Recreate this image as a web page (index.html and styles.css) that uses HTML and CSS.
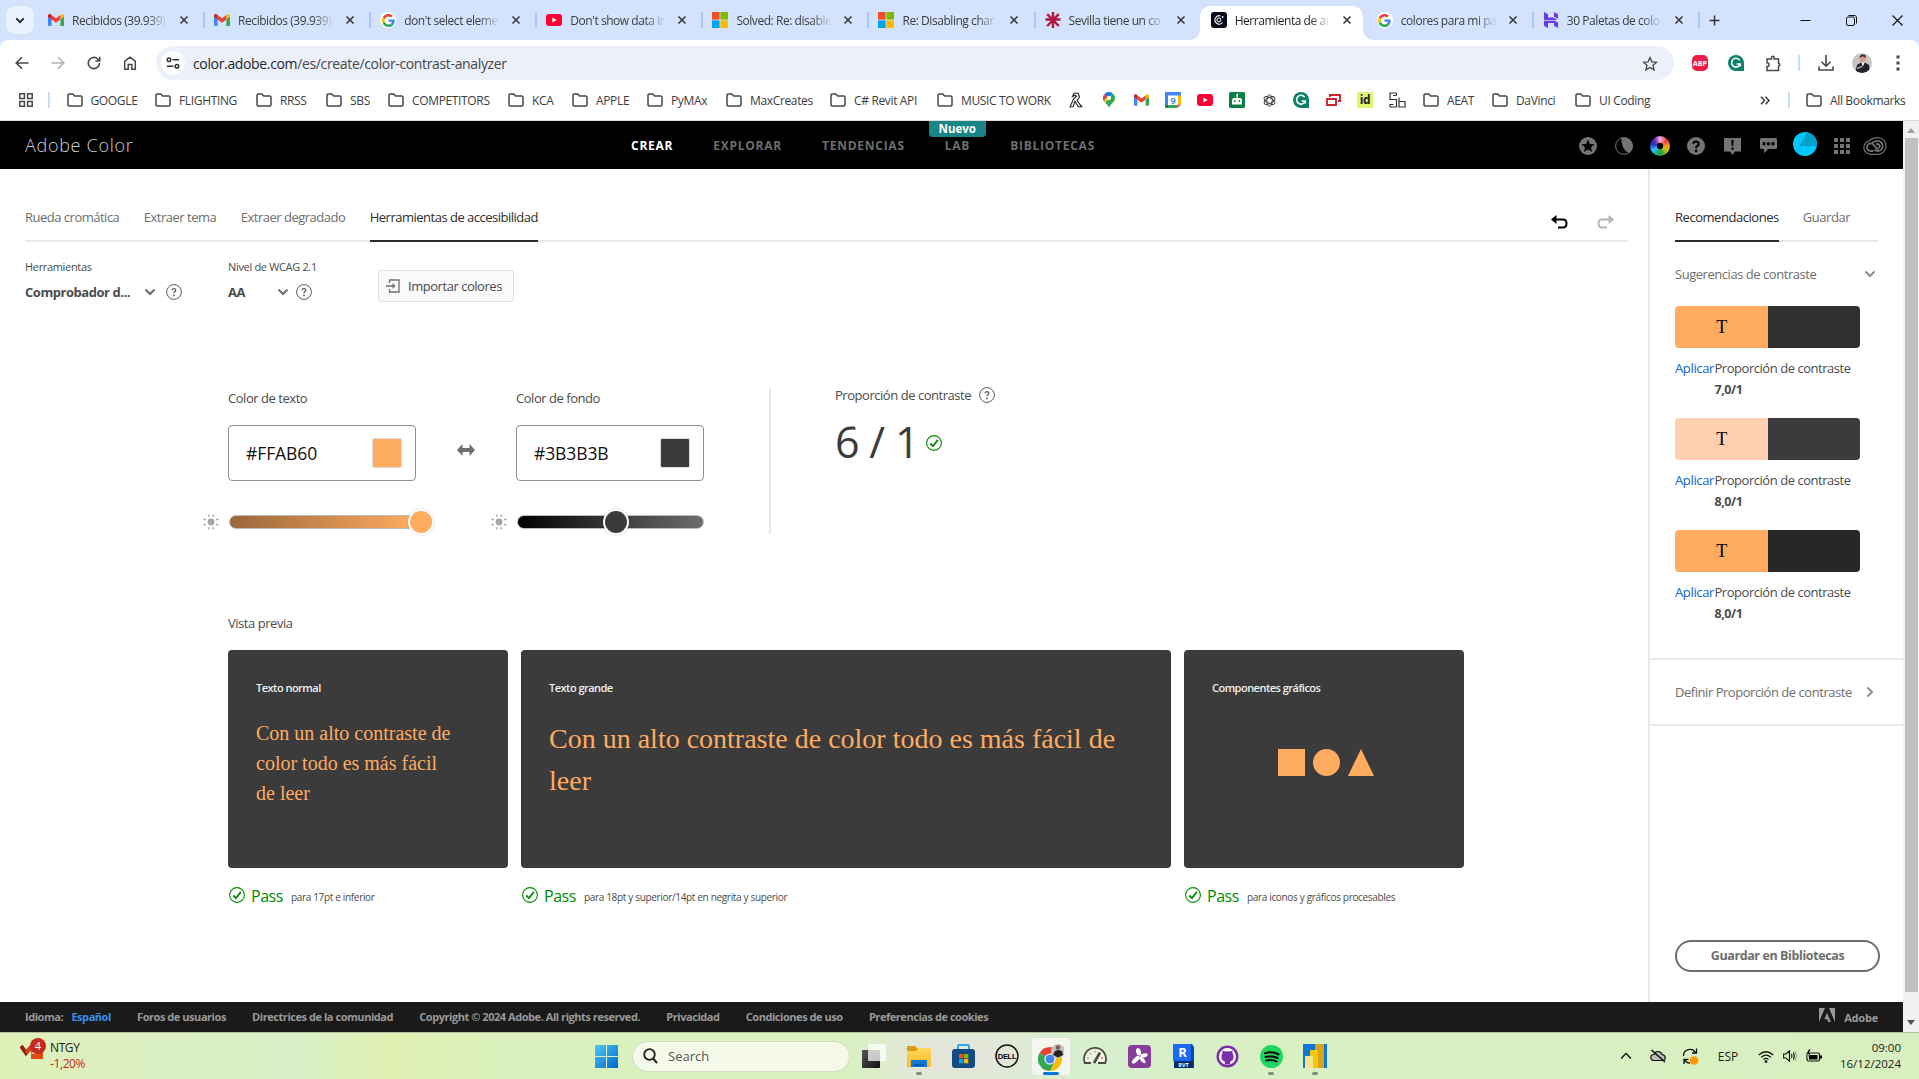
FILE: index.html
```html
<!DOCTYPE html>
<html lang="es">
<head>
<meta charset="utf-8">
<title>Herramienta de análisis de contraste | Adobe Color</title>
<link rel="stylesheet" href="styles.css">
</head>
<body>
<svg class="defs" aria-hidden="true">
  <linearGradient id="winBlue" x1="0" y1="0" x2="1" y2="1"><stop offset="0" stop-color="#4fc8fb"/><stop offset="1" stop-color="#0067c8"/></linearGradient>
  <linearGradient id="folderGold" x1="0" y1="0" x2="0" y2="1"><stop offset="0" stop-color="#ffd95e"/><stop offset="1" stop-color="#fbb829"/></linearGradient>
  <linearGradient id="darkTile" x1="0" y1="0" x2="1" y2="1"><stop offset="0" stop-color="#555"/><stop offset="1" stop-color="#111"/></linearGradient>
  <symbol id="folder" viewBox="0 0 16 14"><path d="M1 2.2Q1 1 2.2 1H5.8L7.6 3H13.8Q15 3 15 4.2V11.8Q15 13 13.8 13H2.2Q1 13 1 11.8Z" fill="none" stroke="#474747" stroke-width="1.5"/></symbol>
  <symbol id="x" viewBox="0 0 10 10"><path d="M1.5 1.5L8.5 8.5M8.5 1.5L1.5 8.5" stroke="#333" stroke-width="1.5"/></symbol>
  <symbol id="gmail" viewBox="0 0 16 12"><path d="M0 2V11a1 1 0 0 0 1 1H3.6V4.6Z" fill="#4285f4"/><path d="M16 2V11a1 1 0 0 1-1 1H12.4V4.6Z" fill="#34a853"/><path d="M12.4 1V5.5L16 2.8V1.6C16 .2 14.3-.5 13.2.4Z" fill="#fbbc04"/><path d="M3.6 5.5V1L8 4.3 12.4 1V5.5L8 8.8Z" fill="#ea4335"/><path d="M0 1.6V2.8L3.6 5.5V1L2.8.4C1.7-.5 0 .2 0 1.6Z" fill="#c5221f"/></symbol>
  <symbol id="google" viewBox="0 0 48 48"><path fill="#ea4335" d="M24 9.500c3.500 0 6.700 1.200 9.200 3.600l6.900-6.900C35.900 2.400 30.500 0 24 0 14.600 0 6.500 5.400 2.600 13.200l8 6.200C12.400 13.700 17.700 9.500 24 9.500z"/><path fill="#4285f4" d="M47 24.500c0-1.600-.2-3.100-.4-4.500H24v9h12.900c-.6 3-2.300 5.500-4.800 7.200l7.700 6C44.400 38 47 31.800 47 24.500z"/><path fill="#fbbc05" d="M10.500 28.600c-.5-1.500-.8-3-.8-4.600s.3-3.100.8-4.600l-8-6.200C.9 16.500 0 20.100 0 24s.9 7.500 2.600 10.800z"/><path fill="#34a853" d="M24 48c6.500 0 11.900-2.100 15.900-5.800l-7.700-6c-2.200 1.500-4.900 2.300-8.200 2.300-6.300 0-11.600-4.200-13.500-9.900l-8 6.200C6.500 42.600 14.600 48 24 48z"/></symbol>
  <symbol id="youtube" viewBox="0 0 16 14"><rect y="1" width="16" height="12" rx="3" fill="#ff0033"/><path d="M6.300 4.500L10.700 7 6.300 9.500Z" fill="#fff"/></symbol>
  <symbol id="microsoft" viewBox="0 0 16 16"><path fill="#f25022" d="M0 0h7.600v7.600H0z"/><path fill="#7fba00" d="M8.400 0H16v7.600H8.400z"/><path fill="#00a4ef" d="M0 8.400h7.600V16H0z"/><path fill="#ffb900" d="M8.400 8.400H16V16H8.400z"/></symbol>
  <symbol id="grammarly" viewBox="0 0 16 16"><path d="M8 0a8 8 0 0 1 8 8v8H8A8 8 0 0 1 8 0Z" fill="#0c8068"/><path d="M11.600 5.200A4.400 4.400 0 1 0 12.200 9H8.600M12.200 8.800V11.400" fill="none" stroke="#fff" stroke-width="1.600"/></symbol>
  <symbol id="help" viewBox="0 0 16 16"><circle cx="8" cy="8" r="7.400" fill="none" stroke="#5a5a5a"/><path d="M6.200 6.200C6.200 4.200 9.800 4.200 9.700 6.300 9.700 7.500 8 7.600 8 9.200" fill="none" stroke="#5a5a5a" stroke-width="1.300"/><circle cx="8" cy="11.400" r=".9" fill="#5a5a5a"/></symbol>
  <symbol id="pass" viewBox="0 0 16 16"><circle cx="8" cy="8" r="7.400" fill="none" stroke="#008a00" stroke-width="1.100"/><path d="M4.300 8.500L7 11.200 11.800 4.900" fill="none" stroke="#008a00" stroke-width="1.800"/></symbol>
  <symbol id="down" viewBox="0 0 12 8"><path d="M1.500 1.500L6 6 10.500 1.500" fill="none" stroke="currentColor" stroke-width="2"/></symbol>
  <symbol id="sun" viewBox="0 0 16 16"><circle cx="8" cy="8" r="3.400" fill="#a5a5a5"/><path d="M5.500.8L6.200 2.900M10.500.8L9.800 2.900M5.500 15.200L6.200 13.100M10.500 15.200L9.800 13.100M.6 5L2.800 5.900M15.400 5L13.200 5.900M.6 11L2.800 10.100M15.400 11L13.200 10.100" stroke="#a5a5a5" stroke-width="1.400"/></symbol>
</svg>

<header class="browser">
  <div class="tabstrip">
    <div class="tab-search"><svg width="10" height="7" viewBox="0 0 12 8"><path d="M1.500 1.500L6 6 10.500 1.500" fill="none" stroke="#1f1f1f" stroke-width="2.200"/></svg></div>
    <div class="tab"><svg class="fav" width="15" height="12"><use href="#gmail"/></svg><span class="tab-title">Recibidos (39.939)</span><svg class="close"><use href="#x"/></svg></div>
    <div class="tab"><svg class="fav" width="15" height="12"><use href="#gmail"/></svg><span class="tab-title">Recibidos (39.939)</span><svg class="close"><use href="#x"/></svg></div>
    <div class="tab"><span class="fav disc"><svg width="13" height="13"><use href="#google"/></svg></span><span class="tab-title">don't select eleme</span><svg class="close"><use href="#x"/></svg></div>
    <div class="tab"><svg class="fav" width="16" height="14"><use href="#youtube"/></svg><span class="tab-title">Don't show data in</span><svg class="close"><use href="#x"/></svg></div>
    <div class="tab"><svg class="fav" width="16" height="16"><use href="#microsoft"/></svg><span class="tab-title">Solved: Re: disable</span><svg class="close"><use href="#x"/></svg></div>
    <div class="tab"><svg class="fav" width="16" height="16"><use href="#microsoft"/></svg><span class="tab-title">Re: Disabling char</span><svg class="close"><use href="#x"/></svg></div>
    <div class="tab no-rule"><svg class="fav" width="16" height="16" viewBox="0 0 16 16"><path d="M8 0V16M.5 7.500H15.500M2.200 2.200L13.800 14M13.800 2.200L2.200 14" stroke="#b0163f" stroke-width="2.400"/></svg><span class="tab-title">Sevilla tiene un co</span><svg class="close"><use href="#x"/></svg></div>
    <div class="tab active"><svg class="fav" width="16" height="16" viewBox="0 0 16 16"><rect width="16" height="16" rx="3" fill="#070b1c"/><path d="M11.500 10.500A4.200 4.200 0 1 1 9.500 3.900" fill="none" stroke="#fff" stroke-width="1.100"/><circle cx="7.900" cy="7.900" r="2" fill="none" stroke="#fff"/><circle cx="11.600" cy="5" r=".9" fill="#fff"/></svg><span class="tab-title">Herramienta de ar</span><svg class="close"><use href="#x"/></svg></div>
    <div class="tab"><span class="fav disc"><svg width="13" height="13"><use href="#google"/></svg></span><span class="tab-title">colores para mi pa</span><svg class="close"><use href="#x"/></svg></div>
    <div class="tab"><svg class="fav" width="16" height="16" viewBox="0 0 16 16"><path d="M1 0L5 2.200V5.500H10.500L14.500 8H1ZM11 0L15 2.200V6.800L11 4.700ZM1 8.800H11.500L15 10.600V16L11 13.800V11H5V16L1 13.800Z" fill="#673de6"/></svg><span class="tab-title">30 Paletas de colo</span><svg class="close"><use href="#x"/></svg></div>
    <svg class="new-tab" width="11" height="11" viewBox="0 0 11 11"><path d="M5.500 .5V10.500M.5 5.500H10.500" stroke="#333" stroke-width="1.500"/></svg>
    <div class="window-controls">
      <svg width="11" height="11" viewBox="0 0 11 11"><path d="M.5 5.500H10.500" stroke="#111"/></svg>
      <svg width="11" height="11" viewBox="0 0 11 11"><rect x=".5" y="2" width="8" height="8.500" rx="1.500" fill="none" stroke="#111"/><path d="M2.500 .5H8.500Q10.500 .5 10.500 2.500V8.500" fill="none" stroke="#111"/></svg>
      <svg width="11" height="11" viewBox="0 0 11 11"><path d="M.5 .5L10.500 10.500M10.500 .5L.5 10.500" stroke="#111" stroke-width="1.100"/></svg>
    </div>
  </div>

  <div class="toolbar">
    <div class="nav-buttons">
      <svg width="14" height="14" viewBox="0 0 14 14"><path d="M13.500 7H1.500M7 1.200L1.200 7 7 12.800" fill="none" stroke="#474747" stroke-width="1.600"/></svg>
      <svg width="14" height="14" viewBox="0 0 14 14"><path d="M.5 7H12.500M7 1.200L12.800 7 7 12.800" fill="none" stroke="#b2b2b2" stroke-width="1.600"/></svg>
      <svg width="14" height="14" viewBox="0 0 14 14"><path d="M12.500 7A5.600 5.600 0 1 1 10.800 3L12.300 4.600M12.700 .8V5H8.400" fill="none" stroke="#474747" stroke-width="1.600"/></svg>
      <svg width="14" height="14" viewBox="0 0 14 14"><path d="M1.700 13.200V5.200L7 1.100 12.300 5.200V13.200H8.800V8.500H5.200V13.200Z" fill="none" stroke="#474747" stroke-width="1.500"/></svg>
    </div>
    <div class="omnibox">
      <span class="site-info"><svg width="14" height="12" viewBox="0 0 14 12"><circle cx="3" cy="2.700" r="1.800" fill="none" stroke="#333" stroke-width="1.500"/><circle cx="11" cy="9.300" r="1.800" fill="none" stroke="#333" stroke-width="1.500"/><path d="M6.500 2.700H13M1 9.300H7.500" stroke="#333" stroke-width="1.500"/></svg></span>
      <span class="url">color.adobe.com<span class="path">/es/create/color-contrast-analyzer</span></span>
      <svg class="star" width="16" height="15" viewBox="0 0 16 15"><path d="M8 1.500L9.900 5.800 14.600 6.200 11 9.300 12.100 13.900 8 11.400 3.900 13.900 5 9.300 1.400 6.200 6.100 5.800Z" fill="none" stroke="#474747" stroke-width="1.300"/></svg>
    </div>
    <div class="extensions">
      <span class="abp">ABP</span>
      <svg width="16" height="16"><use href="#grammarly"/></svg>
      <svg width="17" height="17" viewBox="0 0 17 17"><path d="M2 4H6.500V2.500a1.300 1.300 0 0 1 2.600 0V4H13.500V8.500a1.300 1.300 0 0 1 0 2.600V15.500H2V11.600C4.800 11.600 4.800 7.800 2 7.800Z" fill="none" stroke="#474747" stroke-width="1.500"/></svg>
      <i class="rule"></i>
      <svg width="16" height="16" viewBox="0 0 16 16"><path d="M8 0V11M3.500 6.800L8 11.200 12.500 6.800M1 11.500V15H15V11.500" fill="none" stroke="#474747" stroke-width="1.600"/></svg>
      <svg width="20" height="20" viewBox="0 0 20 20"><clipPath id="face"><circle cx="10" cy="10" r="10"/></clipPath><g clip-path="url(#face)"><path fill="#c8c6c4" d="M0 0h20v20H0z"/><ellipse cx="10.500" cy="6" rx="2.800" ry="3.600" fill="#cf9f87"/><path d="M7.500 5Q7.500 1.500 11 1.500T13.800 5L12 3.500H9.500Z" fill="#332520"/><path d="M3 20L5 12 9 9.500 11 12 13 9.500 17 12 18 20Z" fill="#23232b"/><path d="M9.600 9.500L10.800 14 12.400 9.500Z" fill="#fff"/><path d="M5 15.500L10 13.500" stroke="#c99a84" stroke-width="1.500"/></g></svg>
      <svg width="4" height="16" viewBox="0 0 4 16"><path d="M.5 .5h3v3h-3zM.5 6.500h3v3h-3zM.5 12.500h3v3h-3z" fill="#474747"/></svg>
    </div>
  </div>

  <nav class="bookmarks">
    <svg width="14" height="14" viewBox="0 0 14 14"><path d="M.8 .8h4.600v4.600H.8zM8.600 .8h4.600v4.600H8.600zM.8 8.600h4.600v4.600H.8zM8.600 8.600h4.600v4.600H8.600z" fill="none" stroke="#474747" stroke-width="1.500"/></svg>
    <i class="rule"></i>
    <a><svg class="folder"><use href="#folder"/></svg><span>GOOGLE</span></a>
    <a><svg class="folder"><use href="#folder"/></svg><span>FLIGHTING</span></a>
    <a><svg class="folder"><use href="#folder"/></svg><span>RRSS</span></a>
    <a><svg class="folder"><use href="#folder"/></svg><span>SBS</span></a>
    <a><svg class="folder"><use href="#folder"/></svg><span>COMPETITORS</span></a>
    <a><svg class="folder"><use href="#folder"/></svg><span>KCA</span></a>
    <a><svg class="folder"><use href="#folder"/></svg><span>APPLE</span></a>
    <a><svg class="folder"><use href="#folder"/></svg><span>PyMAx</span></a>
    <a><svg class="folder"><use href="#folder"/></svg><span>MaxCreates</span></a>
    <a><svg class="folder"><use href="#folder"/></svg><span>C# Revit API</span></a>
    <a><svg class="folder"><use href="#folder"/></svg><span>MUSIC TO WORK</span></a>
    <a class="mark"><svg width="14" height="16" viewBox="0 0 14 16"><path d="M3.500 4.500L5 1.200H9.200L10.500 5 8 8.500 12.800 14.800H9.500L5.800 9.500 4.200 14.800 1 15 4.500 7 7.500 4.200 6 3.200Z" fill="none" stroke="#222" stroke-width="1.100"/></svg></a>
    <a class="mark"><svg width="12" height="16" viewBox="0 0 12 16"><path d="M6 0A6 6 0 0 0 1.300 2.300L6 6.200 9.500 1.200A6 6 0 0 0 6 0Z" fill="#1a73e8"/><path d="M1.300 2.300A6 6 0 0 0 .8 9L5 4.900Z" fill="#ea4335"/><path d="M9.500 1.200L2 10.500Q.5 9 .3 7L7 4Z" fill="#4285f4"/><path d="M.8 8.500L4.500 4.500 7.800 7.200 2.800 11.600Z" fill="#fbbc04"/><path d="M9.500 1.200A6 6 0 0 1 11.400 8.500C10 11.200 7 12.500 6 16 5.300 13.500 4 12.600 2.600 11.200Z" fill="#34a853"/><circle cx="6" cy="5.900" r="2.100" fill="#fff"/></svg></a>
    <a class="mark"><svg width="15" height="12"><use href="#gmail"/></svg></a>
    <a class="mark"><svg width="16" height="16" viewBox="0 0 16 16"><path fill="#4285f4" d="M0 0H16V4H0z"/><path fill="#4285f4" d="M0 0H3V13H0z"/><path fill="#fbbc04" d="M13 3.500H16V12.500H13z"/><path fill="#34a853" d="M3 13H12.500V16H3z"/><path fill="#188038" d="M0 13H3V16H1.500Q0 16 0 14.500z"/><path fill="#ea4335" d="M12.500 12.500H16L12.500 16z"/><path fill="#fff" d="M3 3.500H13V13H3z"/><text x="8" y="11.500" class="cal">9</text></svg></a>
    <a class="mark"><svg width="16" height="14"><use href="#youtube"/></svg></a>
    <a class="mark"><svg width="16" height="16" viewBox="0 0 16 16"><rect width="16" height="16" rx="1.500" fill="#0b8043"/><path d="M3 8Q3 6 5 6H11Q13 6 13 8V12.500H3ZM7.300 2.500L9.500 1 8.500 6H7.500Z" fill="#fff"/><circle cx="5.700" cy="9" r=".9" fill="#0b8043"/><circle cx="10.300" cy="9" r=".9" fill="#0b8043"/></svg></a>
    <a class="mark"><svg width="13" height="13" viewBox="0 0 14 14"><g fill="none" stroke="#333" stroke-width="1"><ellipse cx="7" cy="7" rx="3" ry="6.300"/><ellipse cx="7" cy="7" rx="3" ry="6.300" transform="rotate(60 7 7)"/><ellipse cx="7" cy="7" rx="3" ry="6.300" transform="rotate(120 7 7)"/></g></svg></a>
    <a class="mark"><svg width="16" height="16"><use href="#grammarly"/></svg></a>
    <a class="mark"><svg width="15" height="12" viewBox="0 0 15 12"><path d="M1 5H10V11H1ZM4 3V1H14V7H12" fill="none" stroke="#c9252d" stroke-width="1.900"/></svg></a>
    <a class="mark"><span class="idealista">id</span></a>
    <a class="mark"><svg width="17" height="16" viewBox="0 0 17 16"><path d="M7.500 1H1V7.500H7.500V15H1M7.500 3.500H4M7.500 1V3.500M10 5.500V15H16V9.500H10M1 15V12.500H4.500" fill="none" stroke="#333" stroke-width="1.200"/></svg></a>
    <a><svg class="folder"><use href="#folder"/></svg><span>AEAT</span></a>
    <a><svg class="folder"><use href="#folder"/></svg><span>DaVinci</span></a>
    <a><svg class="folder"><use href="#folder"/></svg><span>UI Coding</span></a>
    <svg width="10" height="9" viewBox="0 0 10 9"><path d="M1 .8L4.500 4.500 1 8.200M5.500 .8L9 4.500 5.500 8.200" fill="none" stroke="#333" stroke-width="1.400"/></svg>
    <i class="rule"></i>
    <a><svg class="folder"><use href="#folder"/></svg><span>All Bookmarks</span></a>
  </nav>
</header>

<div class="viewport">
  <div class="page">
    <header class="app-bar">
      <div class="brand">Adobe Color</div>
      <nav class="app-nav"><a class="on">CREAR</a><a>EXPLORAR</a><a>TENDENCIAS</a><a class="lab">LAB<span class="new">Nuevo</span></a><a>BIBLIOTECAS</a></nav>
      <div class="app-icons">
        <svg width="18" height="18" viewBox="0 0 18 18"><circle cx="9" cy="9" r="9" fill="#747474"/><path d="M9 2.600L10.900 6.900 15.500 7.300 12 10.400 13.100 15 9 12.500 4.900 15 6 10.400 2.500 7.300 7.100 6.900Z" fill="#000"/></svg>
        <svg width="18" height="18" viewBox="0 0 18 18"><circle cx="9" cy="9" r="8.400" fill="none" stroke="#747474"/><path d="M6.200 1A8.500 8.500 0 0 1 13.800 16.100Q6.500 12.500 6.200 1Z" fill="#747474"/></svg>
        <i class="wheel"></i>
        <svg width="18" height="18" viewBox="0 0 18 18"><circle cx="9" cy="9" r="9" fill="#747474"/><path d="M6.300 6.800C6.300 3.800 11.800 3.700 11.800 6.800 11.800 8.700 9.100 8.700 9.100 11.200" fill="none" stroke="#000" stroke-width="2.200"/><circle cx="9.100" cy="13.900" r="1.400"/></svg>
        <svg width="17" height="18" viewBox="0 0 17 18"><path d="M0 1H17V14.500H11L8.500 18 6 14.500H0Z" fill="#747474"/><path d="M7.300 3H9.700L9.300 9H7.700ZM7.400 10.500H9.600V12.700H7.400Z"/></svg>
        <svg width="17" height="17" viewBox="0 0 17 17"><path d="M1.500 1H15.500Q17 1 17 2.500V10.500Q17 12 15.500 12H8L4 16.500V12H1.500Q0 12 0 10.500V2.500Q0 1 1.500 1Z" fill="#747474"/><path d="M2.500 5.200h3v3h-3zM7 5.200h3v3H7zM11.500 5.200h3v3h-3z"/></svg>
        <svg class="avatar" width="24" height="24" viewBox="0 0 24 24"><circle cx="12" cy="12" r="12" fill="#00c8ff"/><path d="M7 14L14 .2A12 12 0 0 1 23.800 14Z" fill="#009fcc"/></svg>
        <svg width="16" height="16" viewBox="0 0 16 16"><path d="M0 0h4v4H0zM6 0h4v4H6zM12 0h4v4h-4zM0 6h4v4H0zM6 6h4v4H6zM12 6h4v4h-4zM0 12h4v4H0zM6 12h4v4H6zM12 12h4v4h-4z" fill="#747474"/></svg>
        <svg width="24" height="18" viewBox="0 0 24 18"><path d="M7.500 17.300A6.800 6.800 0 0 1 6.500 3.800Q9.500 .7 14.700 .7A8.300 8.300 0 0 1 14.700 17.300Z" fill="none" stroke="#747474" stroke-width="1.200"/><path d="M10.500 14H7.700A3.800 3.800 0 0 1 7.700 6.400Q9.500 6.400 10.700 7.800L15 13M9.200 6.200Q11 3.800 14.500 3.800A5.200 5.200 0 0 1 14.500 14.200Q12.800 14.200 11.500 12.500M13 7.500Q14 6.800 15.200 7A2.300 2.300 0 0 1 15.500 11.200" fill="none" stroke="#747474" stroke-width="1.800"/></svg>
      </div>
    </header>

    <div class="columns">
      <main class="work">
        <nav class="sections">
          <a>Rueda cromática</a><a>Extraer tema</a><a>Extraer degradado</a><a class="on">Herramientas de accesibilidad</a>
          <span class="history">
            <svg width="17" height="14" viewBox="0 0 17 14"><path d="M1 4.500H12Q15.500 4.500 15.500 8.500T12 12.500H7" fill="none" stroke="#000" stroke-width="2"/><path d="M5.500 0V9L0 4.500Z"/></svg>
            <svg width="17" height="14" viewBox="0 0 17 14"><path d="M16 4.500H5Q1.500 4.500 1.500 8.500T5 12.500H10" fill="none" stroke="#b5b5b5" stroke-width="2"/><path d="M11.500 0V9L17 4.500Z" fill="#b5b5b5"/></svg>
          </span>
        </nav>
        <div class="options">
          <div class="option"><label>Herramientas</label><div class="pick"><b class="tool-name">Comprobador d...</b><svg class="chev"><use href="#down"/></svg><svg class="q"><use href="#help"/></svg></div></div>
          <div class="option wcag"><label>Nivel de WCAG 2.1</label><div class="pick"><b class="level">AA</b><svg class="chev"><use href="#down"/></svg><svg class="q"><use href="#help"/></svg></div></div>
          <button class="import"><svg width="14" height="14" viewBox="0 0 14 14"><path d="M3.500 4V1H13V13H3.500V10M0 7H8" fill="none" stroke="#707070" stroke-width="1.300"/><path d="M6.500 4L9.500 7 6.500 10Z" fill="#707070"/></svg><span>Importar colores</span></button>
        </div>

        <div class="analyzer">
          <section class="color">
            <h3>Color de texto</h3>
            <div class="field"><span>#FFAB60</span><i class="chip orange"></i></div>
            <div class="slider"><svg class="sun"><use href="#sun"/></svg><div class="track warm"></div><i class="thumb warm-thumb"></i></div>
          </section>
          <svg class="swap" width="18" height="12" viewBox="0 0 18 12"><path d="M0 6L5.500 0V4H12.500V0L18 6 12.500 12V8H5.500V12Z" fill="#6e6e6e"/></svg>
          <section class="color">
            <h3>Color de fondo</h3>
            <div class="field"><span>#3B3B3B</span><i class="chip dark"></i></div>
            <div class="slider"><svg class="sun"><use href="#sun"/></svg><div class="track cool"></div><i class="thumb cool-thumb"></i></div>
          </section>
          <section class="ratio">
            <h3>Proporción de contraste<svg class="q"><use href="#help"/></svg></h3>
            <div class="score"><span>6 / 1</span><svg class="tick"><use href="#pass"/></svg></div>
          </section>
        </div>

        <h3 class="preview-title">Vista previa</h3>
        <div class="previews">
          <section><div class="card"><h4>Texto normal</h4><p class="normal">Con un alto contraste de color todo es más fácil de leer</p></div>
            <div class="result"><svg class="tick"><use href="#pass"/></svg><b>Pass</b><span>para 17pt e inferior</span></div></section>
          <section><div class="card"><h4>Texto grande</h4><p class="large">Con un alto contraste de color todo es más fácil de leer</p></div>
            <div class="result"><svg class="tick"><use href="#pass"/></svg><b>Pass</b><span>para 18pt y superior/14pt en negrita y superior</span></div></section>
          <section><div class="card"><h4>Componentes gráficos</h4><svg class="shapes" width="96" height="27" viewBox="0 0 96 27"><path d="M0 0H27V27H0zM83 0L96 27H70z"/><circle cx="48.500" cy="13.500" r="13.500"/></svg></div>
            <div class="result"><svg class="tick"><use href="#pass"/></svg><b>Pass</b><span>para iconos y gráficos procesables</span></div></section>
        </div>
      </main>

      <aside class="panel">
        <nav class="panel-tabs"><a class="on">Recomendaciones</a><a>Guardar</a></nav>
        <div class="panel-head"><span>Sugerencias de contraste</span><svg class="chev"><use href="#down"/></svg></div>
        <div class="tips">
          <div class="tip"><div class="pair"><b class="orange">T</b><i class="tone-a"></i></div><div class="tip-text"><a>Aplicar</a><div><span>Proporción de contraste</span><strong>7,0/1</strong></div></div></div>
          <div class="tip"><div class="pair"><b class="peach">T</b><i class="dark"></i></div><div class="tip-text"><a>Aplicar</a><div><span>Proporción de contraste</span><strong>8,0/1</strong></div></div></div>
          <div class="tip"><div class="pair"><b class="orange">T</b><i class="tone-b"></i></div><div class="tip-text"><a>Aplicar</a><div><span>Proporción de contraste</span><strong>8,0/1</strong></div></div></div>
        </div>
        <div class="define"><span>Definir Proporción de contraste</span><svg class="chev side"><use href="#down"/></svg></div>
        <button class="save">Guardar en Bibliotecas</button>
      </aside>
    </div>

    <footer class="site-footer">
      <span>Idioma:</span><a class="lang">Español</a><a>Foros de usuarios</a><a>Directrices de la comunidad</a><a>Copyright © 2024 Adobe. All rights reserved.</a><a>Privacidad</a><a>Condiciones de uso</a><a>Preferencias de cookies</a>
      <span class="adobe"><svg width="16" height="14" viewBox="0 0 16 14"><path d="M0 0H6L0 14ZM10 0H16V14ZM8 5L12 14H9.300L8.200 11.200H5.300Z" fill="#999"/></svg><em>Adobe</em></span>
    </footer>
  </div>
  <div class="scrollbar"><svg width="8" height="5" viewBox="0 0 8 5"><path d="M4 0L8 5H0Z" fill="#9f9f9f"/></svg><i></i><svg width="8" height="5" viewBox="0 0 8 5"><path d="M0 0H8L4 5Z" fill="#505050"/></svg></div>
</div>

<footer class="taskbar">
  <div class="widget">
    <svg width="28" height="30" viewBox="0 0 28 30"><path d="M11 14H23V26H11Z" fill="#e04a10"/><path d="M1 13L6 20 11 14" fill="none" stroke="#8e1f12" stroke-width="4"/><path d="M6 20L14 12 17 17" fill="none" stroke="#d8430f" stroke-width="4"/><path d="M11 21H17L14 17Z" fill="#f3c3a5"/></svg>
    <span class="badge">4</span>
    <div class="quote"><span>NTGY</span><span class="loss">-1,20%</span></div>
  </div>
  <svg class="start" width="23" height="23" viewBox="0 0 23 23"><path d="M0 0H11V11H0zM12 0H23V11H12zM0 12H11V23H0zM12 12H23V23H12z" fill="url(#winBlue)"/></svg>
  <div class="search"><svg width="15" height="16" viewBox="0 0 15 16"><circle cx="6.500" cy="6.500" r="5.300" fill="none" stroke="#222" stroke-width="1.800"/><path d="M10.200 10.500L14 15" stroke="#222" stroke-width="2"/></svg><span>Search</span></div>
  <div class="apps">
    <div class="app"><svg width="24" height="24" viewBox="0 0 24 24"><rect x="0" y="6" width="18" height="18" rx="1" fill="url(#darkTile)"/><rect x="6" y="0" width="18" height="17" rx="1" fill="#fff" opacity=".75"/></svg></div>
    <div class="app open"><svg width="24" height="24" viewBox="0 0 24 24"><path d="M0 3Q0 2 1 2H8L11 5V10H0Z" fill="#dc9a06"/><path d="M0 7H9L12 4H23Q24 4 24 5V22Q24 23 23 23H1Q0 23 0 22Z" fill="url(#folderGold)"/><path d="M4 17Q4 16 5 16H19Q20 16 20 17V23H4Z" fill="#0f7ad4"/><path d="M7 20h10v2H7z" fill="#075aa8"/></svg></div>
    <div class="app"><svg width="23" height="24" viewBox="0 0 23 24"><path d="M6 6V2Q6 1 7 1H16Q17 1 17 2V6" fill="none" stroke="#29a9ea" stroke-width="2"/><rect y="5" width="23" height="19" rx="3" fill="#154b84"/><path fill="#f25022" d="M7 10h4.300v4.300H7z"/><path fill="#7fba00" d="M12 10h4.300v4.300H12z"/><path fill="#00a4ef" d="M7 15h4.300v4.300H7z"/><path fill="#ffb900" d="M12 15h4.300v4.300H12z"/></svg></div>
    <div class="app"><svg width="24" height="24" viewBox="0 0 24 24"><circle cx="12" cy="12" r="11" fill="none" stroke="#111" stroke-width="1.500"/><text x="12" y="14.800" class="dell">DELL</text></svg></div>
    <div class="app focus"><svg width="26" height="28" viewBox="0 0 26 28"><g transform="translate(12 16)"><path d="M0 0L-10.400-6A12 12 0 0 1 10.400-6Z" fill="#ea4335"/><path d="M0 0L-10.400-6A12 12 0 0 0 0 12L5 3Z" fill="#34a853"/><path d="M0 0L5 3 0 12A12 12 0 0 0 10.400-6H0Z" fill="#fbbc04"/><circle r="5.600" fill="#fff"/><circle r="4.500" fill="#4285f4"/></g><circle cx="20" cy="8" r="7" fill="#c4c0bd"/><circle cx="20" cy="4.500" r="2.200" fill="#7b5a4c"/><path d="M15 12L17 8 20 7 24 8 25 12 20 14.500Z" fill="#222"/></svg></div>
    <div class="app"><svg width="24" height="18" viewBox="0 0 24 18"><path d="M8 16H1.800A11 11 0 1 1 22.200 16H15" fill="#eef3dc" stroke="#4b4b45" stroke-width="1.800"/><path d="M11 16L17 5.500" stroke="#4b4b45" stroke-width="2.600"/><path d="M4 11h2M7 6l1.200 1.200M12 4v1.500" stroke="#777"/><path d="M18 11h2" stroke="#d22"/></svg></div>
    <div class="app"><svg width="23" height="23" viewBox="0 0 23 23"><rect width="23" height="23" rx="4" fill="#853d98"/><g fill="#fff"><ellipse cx="10.500" cy="6.800" rx="2.400" ry="3.800" transform="rotate(-15 10.500 6.800)"/><ellipse cx="16" cy="10.500" rx="3.800" ry="2" transform="rotate(-15 16 10.500)"/><ellipse cx="14.500" cy="15" rx="4" ry="1.600" transform="rotate(45 14.500 15)"/><ellipse cx="7.800" cy="14.800" rx="5" ry="2.200" transform="rotate(-45 7.800 14.800)"/></g></svg></div>
    <div class="app"><svg width="21" height="24" viewBox="0 0 21 24"><path d="M2 0H19L21 3V24H2Z" fill="#0b47a8"/><path d="M0 0H18V17H0Z" fill="#1b6af5"/><path d="M1 17H20V24H1Z" fill="#0a2b66"/><text x="9.500" y="13" class="rvt-r">R</text><text x="10.500" y="22.500" class="rvt">RVT</text></svg></div>
    <div class="app"><svg width="23" height="23" viewBox="0 0 23 23"><circle cx="11.500" cy="11.500" r="11" fill="#7a2fa8"/><circle cx="11.500" cy="11.500" r="8.500" fill="#fff"/><path d="M8.800 19.500V16.500Q5 15.500 5.500 11.500 5.400 9.500 6.500 8.500L6.400 5.500 9 6.600Q11.500 6 14 6.600L16.600 5.500 16.500 8.500Q17.600 9.500 17.500 11.500 18 15.500 14.200 16.500V19.500Z" fill="#7a2fa8"/></svg></div>
    <div class="app open"><svg width="23" height="23" viewBox="0 0 23 23"><circle cx="11.500" cy="11.500" r="11.500" fill="#1ed760"/><path d="M5 8.200Q12 6 18.500 9.300M5.500 12Q12 10.300 17.500 13M6.200 15.600Q12 14.200 16.500 16.500" fill="none" stroke="#111" stroke-width="2.100" stroke-linecap="round"/></svg></div>
    <div class="app open"><svg width="24" height="24" viewBox="0 0 24 24"><path d="M0 0H24V24H0Z" fill="#0c78d4"/><path d="M12 0H21V24H12Z" fill="#dba211"/><path d="M7 6H15V24H7Z" fill="#f2c811"/><path d="M2 12H10V24H2Z" fill="#fbe38a"/></svg></div>
  </div>
  <div class="tray">
    <svg width="12" height="8" viewBox="0 0 12 8"><path d="M1 6.500L6 1.500 11 6.500" fill="none" stroke="#111" stroke-width="1.300"/></svg>
    <svg width="16" height="14" viewBox="0 0 16 14"><path d="M4 11.500Q.8 11.500.8 8.500T4 5.500Q5 2.500 8 2.500T12 5.500Q15.200 6 15.200 8.800T12.500 11.500Z" fill="#bbb" stroke="#111" stroke-width="1.200"/><path d="M1.500 1L15 13" stroke="#111" stroke-width="1.600"/></svg>
    <svg width="17" height="17" viewBox="0 0 17 17"><path d="M1.500 8A6.500 6.500 0 0 1 13.500 4.500M14.500 .5V5H10M2 16V11.500H6.500M2.500 11.500Q4 15 8 15" fill="none" stroke="#111" stroke-width="1.300"/><circle cx="12" cy="12.500" r="4.300" fill="#ff9800"/></svg>
    <span class="lang-code">ESP</span>
    <svg width="16" height="13" viewBox="0 0 16 13"><path d="M.8 5Q8-1.500 15.200 5M3.200 7.300Q8 3 12.800 7.300M5.500 9.500Q8 7.300 10.500 9.500" fill="none" stroke="#111" stroke-width="1.200"/><circle cx="8" cy="11.500" r="1.300"/></svg>
    <svg width="14" height="12" viewBox="0 0 14 12"><path d="M.6 4V8H3L6.500 11.200V.8L3 4Z" fill="none" stroke="#111" stroke-width="1.100"/><path d="M8.500 4Q9.500 6 8.500 8M10.300 2.500Q12.300 6 10.300 9.500" fill="none" stroke="#111" stroke-width="1.100"/><path d="M12 1Q15 6 12 11" fill="none" stroke="#999"/></svg>
    <svg width="16" height="14" viewBox="0 0 16 14"><rect x="1" y="4" width="12.500" height="8" rx="1.500" fill="none" stroke="#111" stroke-width="1.200"/><path d="M3 6H11.500V10.500H3ZM14 6.500H16V9.500H14Z"/><path d="M3 0L0 5H2.500L2 8.500 5.500 3.500H3.500L4.500 0Z" stroke="#dcf0c0" stroke-width=".5"/></svg>
    <div class="clock"><span>09:00</span><span>16/12/2024</span></div>
  </div>
</footer>
</body>
</html>
```
FILE: styles.css
```css
* { box-sizing: border-box; }
html, body { margin: 0; height: 100%; }
body { display: flex; flex-direction: column; width: 1919px; height: 1079px; overflow: hidden; background: #fff; color: #4b4b4b; font-family: "Open Sans", "Noto Sans", sans-serif; font-size: 13px; }
h3, h4, p { margin: 0; font-weight: 400; font-size: inherit; }
svg { display: block; flex: none; }
i, em { font-style: normal; }
.defs { position: absolute; width: 0; height: 0; }
.rule { width: 2px; height: 16px; background: #c9dcfa; }

/* Browser window */
.browser { height: 121px; flex: none; border-bottom: 1px solid #dcdcdc; background: #d3e3fd; font-size: 12px; color: #3c3c3c; }
.tabstrip { display: flex; align-items: flex-start; height: 40px; padding: 6px 0 0 6px; }
.tab-search { display: flex; align-items: center; justify-content: center; width: 28px; height: 28px; margin-right: 4px; border-radius: 9px; background: #e9f0fe; }
.tab { position: relative; display: flex; align-items: center; width: 166.100px; height: 34px; padding: 0 0 6px 10px; }
.tab::after { content: ""; position: absolute; right: -1px; top: 6px; width: 2px; height: 16px; background: #a8c7fa; }
.tab.no-rule::after, .tab.active::after { display: none; }
.fav { flex: none; width: 16px; margin-right: 8px; }
.disc { display: flex; align-items: center; justify-content: center; height: 16px; border-radius: 50%; background: #fff; }
.tab-title { width: 96px; overflow: hidden; white-space: nowrap; letter-spacing: -.45px; line-height: 20px; padding-top: 1px; -webkit-mask-image: linear-gradient(90deg, #000 78%, transparent); mask-image: linear-gradient(90deg, #000 78%, transparent); }
.close { width: 10px; height: 10px; margin-left: 11px; }
.tab.active { color: #1f1f1f; }
.tab.active::before { content: ""; position: absolute; left: -11px; right: -6px; top: 0; bottom: 0; background: radial-gradient(circle at 0 0, transparent 9.500px, #fff 10px) 0 100% / 10px 10px no-repeat, radial-gradient(circle at 100% 0, transparent 9.500px, #fff 10px) 100% 100% / 10px 10px no-repeat, linear-gradient(#fff, #fff) 10px 10px / calc(100% - 20px) 100% no-repeat, radial-gradient(circle at 100% 100%, #fff 9.500px, transparent 10px) 10px 0 / 10px 10px no-repeat, radial-gradient(circle at 0 100%, #fff 9.500px, transparent 10px) calc(100% - 10px) 0 / 10px 10px no-repeat, linear-gradient(#fff, #fff) 20px 0 / calc(100% - 40px) 10px no-repeat; }
.tab.active > * { position: relative; }
.new-tab { margin: 9px 0 0 10px; }
.window-controls { display: flex; gap: 35px; margin: 9px 16px 0 auto; }

.toolbar { display: flex; align-items: center; height: 46px; background: #fff; border-radius: 8px 8px 0 0; }
.nav-buttons { display: flex; gap: 22px; padding-left: 15px; width: 156px; }
.omnibox { display: flex; align-items: center; width: 1518px; height: 34px; border-radius: 17px; background: #ecf0fa; padding-left: 5px; }
.site-info { display: flex; align-items: center; justify-content: center; width: 24px; height: 24px; border-radius: 50%; background: #fff; margin-right: 8px; }
.url { font-size: 14px; letter-spacing: -.35px; color: #1f1f1f; }
.path { color: #474747; }
.star { margin: 0 16px 0 auto; }
.extensions { display: grid; grid-template-columns: 36px 36px 38px 14px 40px 32px 40px; justify-items: center; align-items: center; margin-left: 8px; }
.abp { display: flex; align-items: center; justify-content: center; width: 16px; height: 16px; border-radius: 5px; background: #ed1e45; color: #fff; font: 700 7px "Open Sans", sans-serif; }

.bookmarks { display: grid; grid-template-columns: 29px 18.500px 88.500px 101px 70px 62px 120px 64px 75px 79px 104px 107px 131px 33px repeat(9, 32px) 34px 69px 83px 185px 28px 18px auto; align-items: center; height: 34px; padding: 0 0 6px 19px; background: #fff; white-space: nowrap; letter-spacing: -.35px; }
.bookmarks a { display: flex; align-items: center; gap: 8px; }
.bookmarks .mark { width: 16px; justify-content: center; }
.folder { width: 16px; height: 14px; }
.cal { font: 700 9px "Open Sans", sans-serif; fill: #4285f4; text-anchor: middle; }
.idealista { width: 16px; height: 16px; flex: none; background: #e1f56e; color: #222; font: 700 12px/16px "Open Sans", sans-serif; text-align: center; }

/* Page frame */
.viewport { display: flex; height: 911px; flex: none; }
.page { display: flex; flex-direction: column; width: 1903px; letter-spacing: -.46px; }
.scrollbar { display: flex; flex-direction: column; align-items: center; width: 16px; background: #f1f1f1; padding: 7px 0 7px; }
.scrollbar i { width: 13px; height: 854px; margin: 5px 0 auto; background: #c1c1c1; }

.app-bar { display: grid; grid-template-columns: 631px 1fr auto; align-items: center; height: 48px; background: #000; }
.brand { padding-left: 25px; font-size: 18px; font-weight: 300; letter-spacing: .7px; color: #d0d0d0; }
.app-nav { display: flex; gap: 40px; font-size: 12px; font-weight: 700; letter-spacing: .75px; color: #6e6e6e; }
.app-nav .on { color: #fff; }
.lab { position: relative; }
.new { position: absolute; left: -16px; top: -16px; width: 57px; height: 16px; border-radius: 0 0 4px 4px; background: #188587; color: #fff; text-align: center; line-height: 15px; font-size: 11.500px; letter-spacing: 0; }
.app-icons { display: grid; grid-template-columns: repeat(6, 36px) 38px 35px 32px; justify-items: center; align-items: center; margin: 1px 12px 0 0; }
.avatar { margin-top: -3px; }
.wheel { width: 20px; height: 20px; border-radius: 50%; background: radial-gradient(circle, #000 3px, transparent 3.500px), radial-gradient(circle at 50% 20%, rgba(255,255,255,.5), transparent 35%), conic-gradient(#e070c0, #e83030 45deg, #f0a020 90deg, #c8c020 125deg, #20a030 170deg, #20b090 205deg, #40b8ff 240deg, #2038c0 280deg, #6010a0 325deg, #e070c0); }

.columns { display: flex; height: 833px; }
.work { width: 1648px; padding: 0 20px 0 25px; }
.sections { display: flex; gap: 24.500px; height: 73px; border-bottom: 2px solid #e8e8e8; padding-top: 37px; color: #6e6e6e; letter-spacing: -.5px; }
.sections a, .panel-tabs a { line-height: 22px; height: 36px; white-space: nowrap; }
.sections .on, .panel-tabs .on { color: #2c2c2c; border-bottom: 2px solid #2c2c2c; }
.history { display: flex; gap: 29px; margin: 9px 14px 0 auto; }
.options { display: flex; height: 60px; margin-top: 15px; }
.option { width: 203px; }
.option label { display: block; font-size: 11px; line-height: 20px; letter-spacing: -.33px; }
.pick { display: flex; align-items: center; height: 20px; margin-top: 5px; }
.pick b { font-weight: 700; }
.tool-name { width: 119px; }
.level { width: 49px; }
.chev { width: 12px; height: 8px; color: #6e6e6e; }
.q { width: 16px; height: 16px; margin-left: 10px; }
.wcag { width: 150px; }
.wcag .q { margin-left: 7px; }
.import { display: flex; align-items: center; gap: 8px; width: 136px; height: 32px; margin-top: 13px; padding: 0 7px; border: 1px solid #dedede; border-radius: 3px; background: #fafafa; font: inherit; letter-spacing: inherit; color: #4b4b4b; white-space: nowrap; }

.analyzer { display: flex; height: 146px; margin: 71px 0 0 203px; }
.color { width: 188px; }
.color h3 { height: 22px; line-height: 20px; }
.field { display: flex; align-items: center; justify-content: space-between; height: 56px; margin-top: 15px; padding: 0 13px 0 17px; border: 1px solid #8e8e8e; border-radius: 4px; font-size: 17.500px; letter-spacing: -.1px; color: #111; }
.chip { width: 30px; height: 30px; border: 1px solid #dcdcdc; border-radius: 2px; }
.orange { background: #ffab60; }
.dark { background: #3b3b3b; }
.slider { position: relative; display: flex; align-items: center; width: 232px; height: 28px; margin: 27px 0 0 -25px; }
.sun { width: 16px; height: 16px; margin-right: 10px; }
.track { width: 187px; height: 14px; border: 1px solid #bdbdbd; border-radius: 7px; }
.warm { background: linear-gradient(90deg, #99673a, #ffab60); }
.cool { background: linear-gradient(90deg, #000, #6e6e6e); }
.thumb { position: absolute; top: 1px; width: 26px; height: 26px; border: 2px solid #fff; border-radius: 50%; box-shadow: 0 0 2px rgba(0,0,0,.25); }
.warm-thumb { left: 205px; background: #ffab60; }
.cool-thumb { left: 112px; background: #3b3b3b; }
.swap { margin: 56px 41px 0; }
.ratio { margin-left: 65px; padding-left: 64px; border-left: 2px solid #e8e8e8; }
.ratio h3 { display: flex; align-items: center; height: 14px; }
.ratio .q { margin-left: 8px; }
.score { display: flex; align-items: center; margin-top: 8px; height: 62px; font-size: 43px; letter-spacing: -.7px; color: #3b3b3b; }
.tick { width: 16px; height: 16px; }
.score .tick { margin: 4px 0 0 7px; }

.preview-title { margin: 79px 0 0 203px; line-height: 20px; }
.previews { display: grid; grid-template-columns: 280px 650px 280px; gap: 13px; margin: 17px 0 0 203px; }
.card { height: 218px; padding: 28px; border-radius: 4px; background: #3b3b3b; }
.card h4 { font-size: 11px; font-weight: 600; line-height: 20px; letter-spacing: -.52px; color: #f0f0f0; }
.card p { color: #ffab60; font-family: "Liberation Serif", serif; letter-spacing: 0; }
.normal { margin-top: 20px; width: 200px; font-size: 20px; line-height: 30px; }
.large { margin-top: 20px; font-size: 28px; line-height: 42px; }
.shapes { margin: 51px 62px 0 66px; fill: #ffab60; }
.result { display: flex; align-items: center; height: 22px; margin-top: 16px; padding-left: 1px; white-space: nowrap; }
.result b { margin-left: 6px; padding-top: 1px; font-size: 16px; font-weight: 400; color: #008a00; }
.result span { margin-left: 8px; font-size: 10px; letter-spacing: -.33px; padding-top: 3px; }

/* Recommendations panel */
.panel { display: flex; flex-direction: column; width: 255px; border-left: 2px solid #e8e8e8; white-space: nowrap; }
.panel-tabs { display: flex; gap: 24px; height: 73px; margin: 0 25px; padding-top: 37px; border-bottom: 2px solid #e8e8e8; color: #6e6e6e; }
.panel-head, .define { display: flex; align-items: center; justify-content: space-between; color: #6e6e6e; padding: 0 27px 0 25px; }
.panel .chev { color: #8e8e8e; }
.panel-head { margin-top: 22px; height: 20px; }
.tips { height: 376px; padding: 22px 0 0 25px; border-bottom: 2px solid #e8e8e8; }
.tip { height: 112px; }
.pair { display: flex; width: 185px; height: 42px; border-radius: 4px; overflow: hidden; }
.pair b { width: 93px; text-align: center; font: 400 18px/42px "Liberation Serif", serif; color: #000; }
.pair i { flex: 1; }
.peach { background: #ffcfb2; }
.tone-a { background: #303030; }
.tone-b { background: #272727; }
.tip-text { display: flex; margin-top: 10px; line-height: 21px; }
.tip-text a { color: #0d66d0; width: 39.500px; letter-spacing: -.35px; }
.tip-text div { display: flex; flex-direction: column; align-items: flex-start; }
.tip-text strong { font-weight: 700; font-size: 12.500px; }
.define { height: 66px; border-bottom: 2px solid #e8e8e8; }
.side { transform: rotate(-90deg); }
.save { width: 205px; height: 32px; margin: auto 0 30px 25px; border: 2px solid #6e6e6e; border-radius: 16px; background: #fff; font: 700 12.500px/26px "Open Sans", sans-serif; letter-spacing: -.4px; color: #6e6e6e; }

.site-footer { display: flex; align-items: center; gap: 26.200px; height: 30px; padding: 0 25px 1px; background: #1a1a1a; color: #999; font-size: 11px; font-weight: 700; letter-spacing: -.45px; white-space: nowrap; }
.site-footer .lang { margin-left: -18px; color: #378ef0; }
.adobe { display: flex; align-items: center; gap: 9px; margin-left: auto; letter-spacing: -.2px; }
.adobe svg { margin-top: -3px; }
.adobe em { padding-top: 2px; }

/* Taskbar */
.taskbar { display: grid; grid-template-columns: 595px 37px 218px 502px 1fr; align-items: center; flex: none; height: 47px; border-top: 1px solid #b4bd9c; background: radial-gradient(ellipse 80px 60px at 930px 50%, rgba(233,226,224,.9), transparent), radial-gradient(ellipse 70px 60px at 1000px 50%, rgba(233,226,224,.7), transparent), linear-gradient(90deg, #dff0b8, #d9efc4 200px, #d8f0c6 300px, #e0efb2 390px, #dbf2be 500px, #d9f1bc 800px, #d6efcf 1060px, #d9f0c2 1300px, #d8efc0); font-size: 12px; color: #1a1a1a; }
.widget { position: relative; display: flex; align-items: flex-start; padding-left: 20px; height: 46px; }
.badge { position: absolute; left: 30px; top: 5px; width: 16px; height: 16px; border-radius: 50%; background: #c42b1c; color: #fff; text-align: center; line-height: 16px; font-size: 11px; }
.quote { display: flex; flex-direction: column; line-height: 16px; letter-spacing: -.4px; padding: 7px 0 0 2px; }
.loss { color: #c42b1c; }
.search { display: flex; align-items: center; gap: 10px; height: 31px; padding-left: 10px; border: 1px solid #d3dcc2; border-radius: 16px; background: #f4f9ea; color: #555; font-size: 13px; }
.apps { display: grid; grid-template-columns: 46px 44px 44px 44px 44px 44px 44px 44px 44px 44px 44px; padding-left: 1px; }
.app { position: relative; display: flex; align-items: center; justify-content: center; height: 46px; }
.app.open::after { content: ""; position: absolute; bottom: 4px; width: 6px; height: 3px; border-radius: 2px; background: #84897c; }
.app.focus { margin: 4px 2px 3px; height: 39px; border: 1px solid #dfe4d6; border-radius: 4px; background: #f4f7ef; }
.focus::after { content: ""; position: absolute; bottom: 0; width: 16px; height: 3px; border-radius: 2px; background: #0078d4; }
.dell { font: 700 7.500px "Liberation Sans", sans-serif; text-anchor: middle; letter-spacing: -.3px; }
.rvt-r { font: 700 13px "Open Sans", sans-serif; fill: #fff; text-anchor: middle; }
.rvt { font: 700 5.500px "Open Sans", sans-serif; fill: #fff; text-anchor: middle; }
.tray { display: grid; grid-template-columns: 24px 40px 24px 52px 24px 24px 24px auto; justify-content: end; justify-items: center; align-items: center; padding-right: 18px; }
.clock { display: flex; flex-direction: column; align-items: flex-end; width: 75px; line-height: 16px; font-size: 11.500px; }
```
